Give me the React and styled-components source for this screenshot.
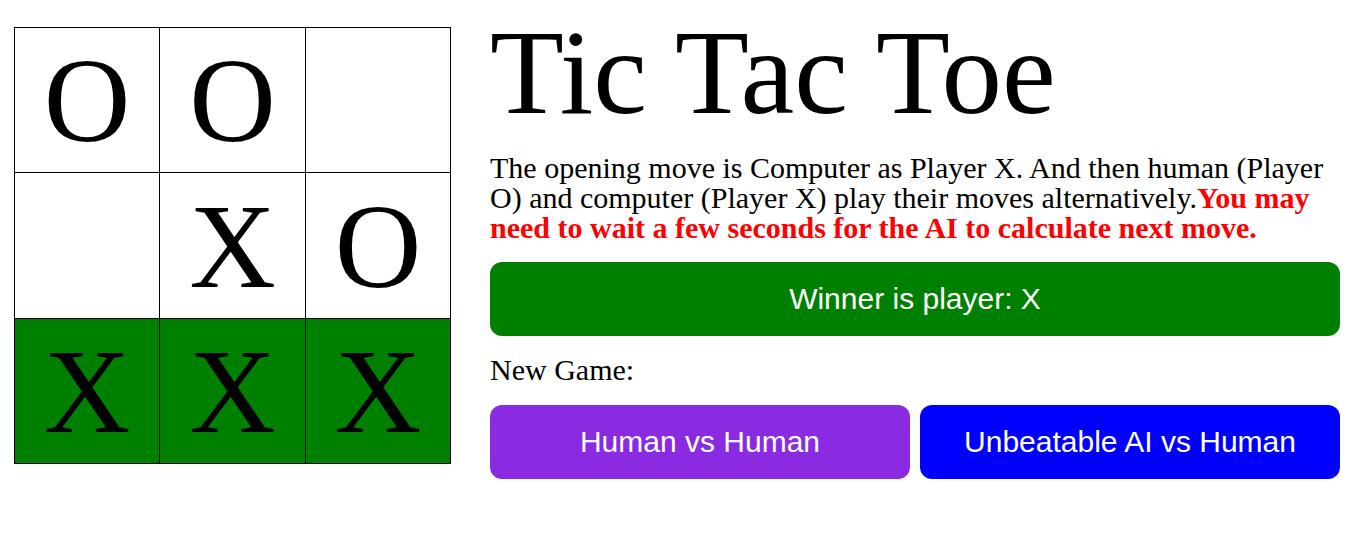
import React from "react";
import styled, { createGlobalStyle } from "styled-components";

const GlobalStyle = createGlobalStyle`
  body {
    margin: 0;
    background: #ffffff;
    font-family: "Liberation Serif", "Times New Roman", serif;
  }
`;

const Page = styled.div`
  display: flex;
  align-items: flex-start;
  gap: 39px;
  padding: 8px 9px 0 14px;
`;

const Board = styled.div`
  display: grid;
  grid-template-columns: 144px 145px 144px;
  grid-template-rows: 144px 145px 144px;
  gap: 1px;
  padding: 1px;
  background: #000000;
  margin-top: 19px;
  flex-shrink: 0;
`;

const Cell = styled.div`
  display: flex;
  align-items: center;
  justify-content: center;
  background: ${(p) => (p.$win ? "#008000" : "#ffffff")};
  color: #000000;
  font-family: "Liberation Serif", "Times New Roman", serif;
  font-size: 120px;
  line-height: 1;
  padding-top: 2px;
  box-sizing: border-box;
`;

const Side = styled.div`
  flex: 1;
  display: flex;
  flex-direction: column;
`;

const Title = styled.h1`
  margin: 4px 0 0;
  font-size: 121px;
  font-weight: normal;
  line-height: 1;
`;

const Intro = styled.p`
  margin: 20px 0 0;
  font-size: 30px;
  line-height: 30px;
`;

const Warning = styled.strong`
  color: #ff0000;
`;

const Banner = styled.div`
  margin-top: 19px;
  height: 74px;
  border-radius: 12px;
  background: #008000;
  color: #ffffff;
  display: flex;
  align-items: center;
  justify-content: center;
  font-family: "Liberation Sans", Arial, sans-serif;
  font-size: 30px;
`;

const Label = styled.div`
  margin-top: 19px;
  font-size: 30px;
  line-height: 30px;
`;

const Buttons = styled.div`
  margin-top: 20px;
  display: grid;
  grid-template-columns: 1fr 1fr;
  gap: 10px;
`;

const ModeButton = styled.button`
  height: 74px;
  border: none;
  border-radius: 12px;
  background: ${(p) => p.$color};
  color: #ffffff;
  font-family: "Liberation Sans", Arial, sans-serif;
  font-size: 30px;
  cursor: pointer;
`;

const cells = [
  ["O", false], ["O", false], ["", false],
  ["", false], ["X", false], ["O", false],
  ["X", true], ["X", true], ["X", true],
];

export default function App() {
  return (
    <>
      <GlobalStyle />
      <Page>
        <Board>
          {cells.map(([v, win], i) => (
            <Cell key={i} $win={win}>{v}</Cell>
          ))}
        </Board>
        <Side>
          <Title>Tic Tac Toe</Title>
          <Intro>
            The opening move is Computer as Player X. And then human (Player O) and computer
            (Player X) play their moves alternatively.
            <Warning>You may need to wait a few seconds for the AI to calculate next move.</Warning>
          </Intro>
          <Banner>Winner is player: X</Banner>
          <Label>New Game:</Label>
          <Buttons>
            <ModeButton $color="#8a2be2">Human vs Human</ModeButton>
            <ModeButton $color="#0000ff">Unbeatable AI vs Human</ModeButton>
          </Buttons>
        </Side>
      </Page>
    </>
  );
}
